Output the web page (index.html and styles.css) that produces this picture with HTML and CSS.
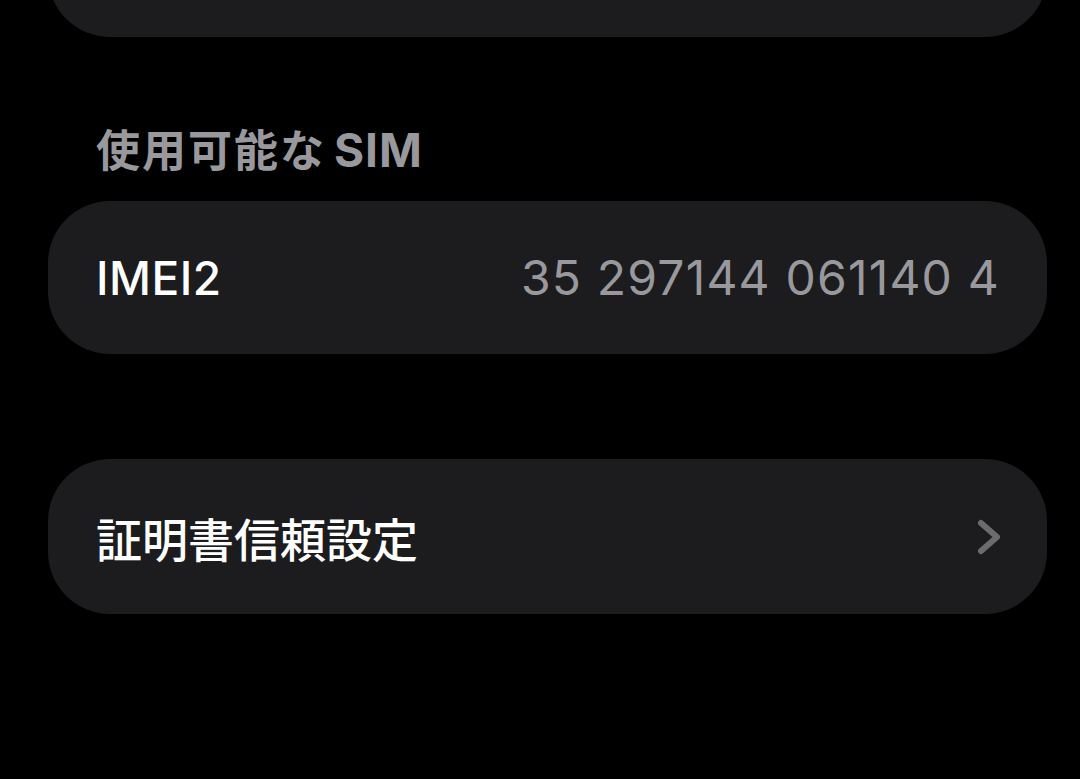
FILE: index.html
```html
<!DOCTYPE html>
<html lang="ja">
<head>
  <meta charset="UTF-8" />
  <meta name="viewport" content="width=device-width, initial-scale=1.0"/>
  <title>SIM</title>
  <link rel="stylesheet" href="styles.css">
</head>
<body>
  <div class="screen">
    <div class="card card-top"></div>

    <h2 class="section-title">使用可能な<span class="latin">SIM</span></h2>
    <div class="card row">
      <span class="row-label">IMEI2</span>
      <span class="row-value">35 297144 061140 4</span>
    </div>

    <div class="card row row-link">
      <span class="row-label">証明書信頼設定</span>
      <svg class="chevron" width="26" height="38" viewBox="0 0 26 38">
        <polyline points="5,5 21,19 5,33" fill="none" stroke="currentColor" stroke-width="6" stroke-linecap="round" stroke-linejoin="round"/>
      </svg>
    </div>
  </div>
</body>
</html>
```

FILE: styles.css
```css
body { margin: 0; background: #000; font-family: Inter, "Noto Sans CJK JP", sans-serif; color: #fff; height: 779px; overflow: hidden; }
.screen { padding: 0 33px 0 48px; display: flex; flex-direction: column; }
.card { background: #1c1c1e; border-radius: 62px; }
.card-top { height: 140px; margin-top: -103px; }
.section-title { margin: 90px 0 26px 48px; height: 48px; font-size: 44px; line-height: 46px; font-weight: 700; color: #98989d; letter-spacing: 2px; }
.section-title .latin { margin-left: 8px; font-size: 46px; line-height: 46px; letter-spacing: 1px; }
.row { height: 153px; padding: 0 47px 0 48px; display: flex; align-items: center; justify-content: space-between; }
.row-label { font-size: 46px; font-weight: 500; letter-spacing: 0.5px; }
.row-value { font-size: 48px; font-weight: 400; color: #98989d; letter-spacing: 1.2px; }
.row-link .row-label { letter-spacing: 0; }
.row-link { margin-top: 105px; height: 155px; padding-right: 45px; }
.chevron { color: #6c6c70; }
```
